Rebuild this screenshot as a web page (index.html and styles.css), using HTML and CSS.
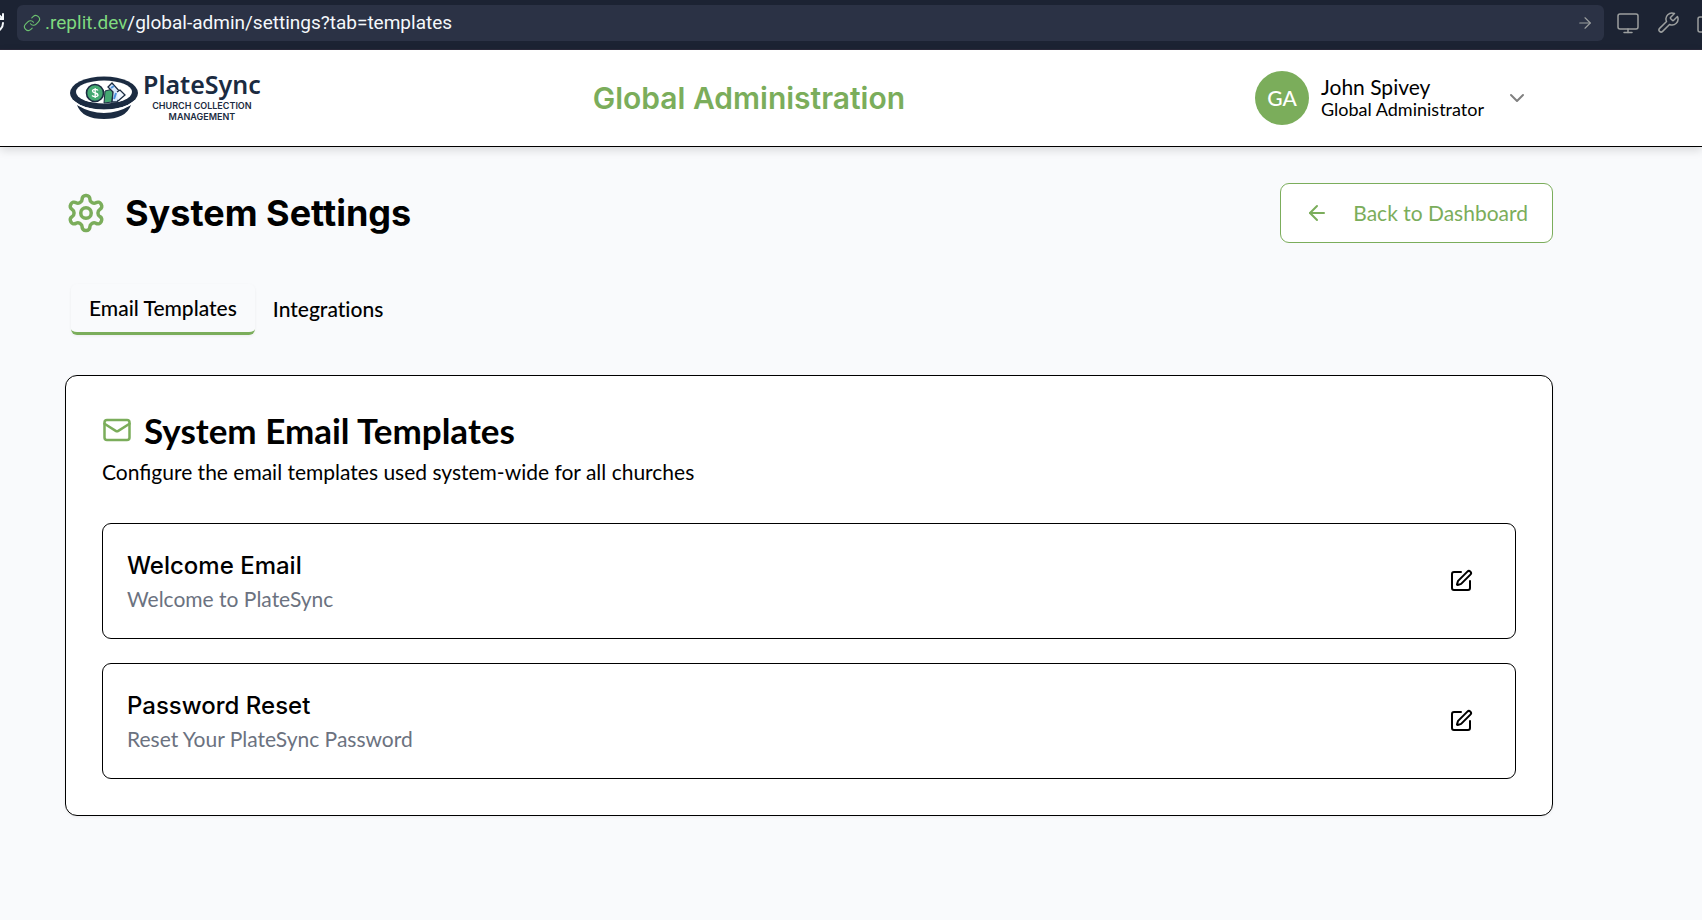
FILE: index.html
```html
<!DOCTYPE html>
<html lang="en">
<head>
<meta charset="utf-8">
<title>System Settings - PlateSync</title>
<link rel="stylesheet" href="styles.css">
</head>
<body>
<div class="browser-bar">
  <button class="bar-icon reload" aria-label="Reload">
    <svg viewBox="0 0 24 24" class="icon"><path d="M3 12a9 9 0 0 1 9-9 9.750 9.750 0 0 1 6.740 2.740L21 8"/><path d="M21 3v5h-5"/><path d="M21 12a9 9 0 0 1-9 9 9.750 9.750 0 0 1-6.740-2.740L3 16"/></svg>
  </button>
  <div class="address">
    <svg viewBox="0 0 24 24" class="icon link-icon"><path d="M10 13a5 5 0 0 0 7.540.540l3-3a5 5 0 0 0-7.070-7.070l-1.720 1.710"/><path d="M14 11a5 5 0 0 0-7.540-.540l-3 3a5 5 0 0 0 7.070 7.070l1.710-1.710"/></svg>
    <span class="url"><span class="host">.replit.dev</span>/global-admin/settings?tab=templates</span>
    <button class="bar-icon go" aria-label="Go"><svg viewBox="0 0 24 24" class="icon"><path d="M5 12h14"/><path d="m12 5 7 7-7 7"/></svg></button>
  </div>
  <div class="bar-tools">
    <button class="bar-icon" aria-label="Preview size"><svg viewBox="0 0 24 24" class="icon"><rect width="20" height="15" x="2" y="3" rx="2"/><path d="M8 21.500h8"/><path d="M12 18v3.500"/></svg></button>
    <button class="bar-icon" aria-label="Developer tools"><svg viewBox="0 0 24 24" class="icon"><path d="M14.700 6.300a1 1 0 0 0 0 1.400l1.600 1.600a1 1 0 0 0 1.400 0l3.770-3.770a6 6 0 0 1-7.940 7.940l-6.910 6.910a2.120 2.120 0 0 1-3-3l6.910-6.910a6 6 0 0 1 7.940-7.940l-3.760 3.760z"/></svg></button>
    <button class="bar-icon" aria-label="Open in new tab"><svg viewBox="0 0 24 24" class="icon"><path d="M15 3h6v6"/><path d="M10 14 21 3"/><path d="M18 13v6a2 2 0 0 1-2 2H4a2 2 0 0 1-2-2V8a2 2 0 0 1 2-2h6"/></svg></button>
  </div>
</div>

<header class="site-header">
  <a href="#" class="logo" aria-label="PlateSync home">
    <svg class="logo-mark" viewBox="0 0 68 42">
      <path d="M7 28Q20 36 34 36T61 28Q56 42 34 42 12 42 7 28Z" fill="#1b2b41"/>
      <ellipse cx="34" cy="16" rx="34" ry="16.500" fill="#1b2b41"/>
      <path d="M3 24Q14 33.500 34 33.500T65 24" fill="none" stroke="#fff" stroke-width="1.500"/>
      <ellipse cx="34" cy="15" rx="28" ry="11.500" fill="#fff"/>
      <path d="M35 14 43 12 42 25 34 26Z" fill="#45a972" stroke="#1b2b41"/>
      <path d="M38 10 42 6 52 17 47 25 42 25 43 15Z" fill="#d7e8fb" stroke="#1b2b41" stroke-width="1.300"/>
      <path d="M47 15 50 13 55 18 48 24" fill="#eef5fd" stroke="#1b2b41" stroke-width="1.300"/>
      <path d="M41 11 44 9M46 16 44 22" stroke="#4a90dd" stroke-width="2" fill="none"/>
      <circle cx="25" cy="16" r="8.500" fill="#45a972" stroke="#1b2b41" stroke-width="1.600"/>
      <path d="M28 13.500c-1-1.500-5.500-1.500-5.500.5 0 2.500 5.500 1.500 5.500 4 0 2-4.500 2-6 .5M25.200 11v10" fill="none" stroke="#fff" stroke-width="1.300"/>
    </svg>
    <span class="logo-text">
      <span class="logo-name">PlateSync</span>
      <span class="logo-tag">CHURCH COLLECTION<br>MANAGEMENT</span>
    </span>
  </a>
  <div class="header-title">Global Administration</div>
  <button class="user-menu">
    <span class="avatar">GA</span>
    <span class="user-text">
      <span class="user-name">John Spivey</span>
      <span class="user-role">Global Administrator</span>
    </span>
    <svg viewBox="0 0 24 24" class="icon chevron"><path d="m6 9 6 6 6-6"/></svg>
  </button>
</header>

<main class="page">
  <div class="page-head">
    <h1 class="page-title">
      <svg viewBox="0 0 24 24" class="icon gear"><path d="M12.220 2h-.440a2 2 0 0 0-2 2v.180a2 2 0 0 1-1 1.730l-.430.250a2 2 0 0 1-2 0l-.150-.080a2 2 0 0 0-2.730.730l-.220.380a2 2 0 0 0 .730 2.730l.150.100a2 2 0 0 1 1 1.720v.510a2 2 0 0 1-1 1.740l-.150.090a2 2 0 0 0-.730 2.730l.220.380a2 2 0 0 0 2.730.730l.150-.080a2 2 0 0 1 2 0l.430.250a2 2 0 0 1 1 1.730V20a2 2 0 0 0 2 2h.440a2 2 0 0 0 2-2v-.180a2 2 0 0 1 1-1.730l.430-.250a2 2 0 0 1 2 0l.150.080a2 2 0 0 0 2.730-.730l.220-.390a2 2 0 0 0-.730-2.730l-.150-.080a2 2 0 0 1-1-1.740v-.500a2 2 0 0 1 1-1.740l.150-.090a2 2 0 0 0 .730-2.730l-.220-.380a2 2 0 0 0-2.730-.730l-.150.080a2 2 0 0 1-2 0l-.430-.250a2 2 0 0 1-1-1.730V4a2 2 0 0 0-2-2z"/><circle cx="12" cy="12" r="3"/></svg>
      System Settings
    </h1>
    <a href="#" class="back-button">
      <svg viewBox="0 0 24 24" class="icon"><path d="m12 19-7-7 7-7"/><path d="M19 12H5"/></svg>
      Back to Dashboard
    </a>
  </div>

  <div class="tabs" role="tablist">
    <button class="tab tab-active" role="tab" aria-selected="true">Email Templates</button>
    <button class="tab" role="tab" aria-selected="false">Integrations</button>
  </div>

  <section class="card">
    <h2 class="card-title">
      <svg viewBox="0 0 24 24" class="icon mail"><rect width="20" height="16" x="2" y="4" rx="2"/><path d="m22 7-8.970 5.700a1.940 1.940 0 0 1-2.060 0L2 7"/></svg>
      System Email Templates
    </h2>
    <p class="card-desc">Configure the email templates used system-wide for all churches</p>
    <div class="template-list">
      <article class="template">
        <div>
          <h3 class="template-name">Welcome Email</h3>
          <p class="template-subject">Welcome to PlateSync</p>
        </div>
        <button class="edit-button" aria-label="Edit Welcome Email"><svg viewBox="0 0 24 24" class="icon"><path d="M12 3H5a2 2 0 0 0-2 2v14a2 2 0 0 0 2 2h14a2 2 0 0 0 2-2v-7"/><path d="M18.375 2.625a1 1 0 0 1 3 3l-9.013 9.014a2 2 0 0 1-.853.505l-2.873.840a.5.5 0 0 1-.620-.620l.840-2.873a2 2 0 0 1 .506-.852z"/></svg></button>
      </article>
      <article class="template">
        <div>
          <h3 class="template-name">Password Reset</h3>
          <p class="template-subject">Reset Your PlateSync Password</p>
        </div>
        <button class="edit-button" aria-label="Edit Password Reset"><svg viewBox="0 0 24 24" class="icon"><path d="M12 3H5a2 2 0 0 0-2 2v14a2 2 0 0 0 2 2h14a2 2 0 0 0 2-2v-7"/><path d="M18.375 2.625a1 1 0 0 1 3 3l-9.013 9.014a2 2 0 0 1-.853.505l-2.873.840a.5.5 0 0 1-.620-.620l.840-2.873a2 2 0 0 1 .506-.852z"/></svg></button>
      </article>
    </div>
  </section>
</main>
</body>
</html>
```

FILE: styles.css
```css
* { box-sizing: border-box; }

body {
  margin: 0;
  min-height: 100vh;
  overflow-x: hidden;
  background: #f9fafc;
  color: #000;
  font-family: Lato, sans-serif;
  font-size: 21px;
  line-height: 30px;
}

h1, h2, h3, p { margin: 0; }
a { color: inherit; text-decoration: none; }
button { padding: 0; border: 0; background: none; color: inherit; font: inherit; text-align: left; cursor: pointer; }

.icon {
  display: block;
  flex: none;
  width: 24px;
  height: 24px;
  fill: none;
  stroke: currentColor;
  stroke-width: 2;
  stroke-linecap: round;
  stroke-linejoin: round;
}

/* Browser bar */
.browser-bar {
  display: flex;
  align-items: center;
  height: 50px;
  padding-bottom: 4px;
  overflow: hidden;
  background: #1c2333;
  border-bottom: 1px solid #2b2a3b;
  color: #9c9f9f;
}
.bar-icon .icon { stroke-width: 1.5; }
.reload { margin-left: -18px; color: #f5f9fc; }
.reload .icon { stroke-width: 2; }
.address {
  display: flex;
  flex: 1;
  align-items: center;
  gap: 4px;
  height: 36px;
  margin-left: 11px;
  padding: 0 10px 0 6px;
  background: #2b3245;
  border-radius: 6px;
}
.link-icon { width: 18px; height: 18px; color: #6cc070; stroke-width: 1.5; }
.url { flex: 1; color: #f5f9fc; font-family: Roboto, sans-serif; font-size: 19px; }
.host { color: #7fd97f; }
.go .icon { width: 18px; height: 18px; }
.bar-tools { display: flex; gap: 16px; margin: 0 -18px 0 12px; }

/* Site header */
.site-header {
  display: flex;
  align-items: center;
  justify-content: space-between;
  min-height: 97px;
  padding: 0 173px 0 65px;
  background: #fff;
  border-bottom: 1px solid #000;
  box-shadow: 0 3px 9px rgba(0, 0, 0, 0.14);
}
.logo { display: flex; align-items: center; gap: 5px; padding-left: 5px; }
.logo-mark { width: 68px; height: 44px; }
.logo-text { margin-bottom: 6px; color: #1b2b41; }
.logo-name { display: block; font-family: "Noto Sans", sans-serif; font-size: 25px; font-weight: 600; line-height: 32px; }
.logo-tag { display: block; font-family: Inter, sans-serif; font-size: 9px; font-weight: 600; line-height: 11px; text-align: center; }
.header-title { margin-right: 18px; color: #7bad5b; font-family: Inter, sans-serif; font-size: 30px; font-weight: 600; line-height: 36px; }
.user-menu { display: flex; align-items: center; gap: 12px; }
.avatar {
  display: grid;
  place-items: center;
  width: 54px;
  height: 54px;
  border-radius: 50%;
  background: #7bad5b;
  color: #fff;
  font-weight: 500;
}
.user-text { min-width: 166px; }
.user-name, .user-role { display: block; }
.user-name { font-size: 21px; line-height: 22px; }
.user-role { font-size: 18px; line-height: 22px; }
.chevron { margin-left: 6px; color: #808080; }

/* Page */
.page { padding: 36px 149px 36px 65px; }
.page-head { display: flex; align-items: center; justify-content: space-between; }
.page-title { display: flex; align-items: center; gap: 18px; font-family: Inter, sans-serif; font-size: 36px; font-weight: 700; line-height: 45px; }
.gear { width: 42px; height: 42px; color: #7bad5b; }
.back-button {
  display: flex;
  align-items: center;
  gap: 24px;
  height: 60px;
  padding: 0 24px;
  border: 1px solid #7bad5b;
  border-radius: 9px;
  background: #fff;
  color: #7bad5b;
}
.tabs { display: flex; align-items: center; margin-top: 41px; padding: 0 6px; }
.tab { height: 51px; padding: 0 18px; border-bottom: 1px solid transparent; border-radius: 6px; font-weight: 500; font-variant-ligatures: none; }
.tab-active { border-bottom: 3px solid #7bad5b; box-shadow: 0 1px 3px rgba(0, 0, 0, 0.06); }

.card {
  margin-top: 40px;
  padding: 36px;
  border: 1px solid #000;
  border-radius: 12px;
  background: #fff;
  box-shadow: 0 1px 3px rgba(0, 0, 0, 0.06);
}
.card-title { display: flex; align-items: center; gap: 12px; font-size: 35px; font-weight: 700; line-height: 36px; }
.mail { width: 30px; height: 30px; color: #7bad5b; }
.card-desc { margin-top: 9px; }
.template-list { display: grid; gap: 24px; margin-top: 36px; }
.template {
  display: flex;
  align-items: center;
  justify-content: space-between;
  padding: 24px;
  border: 1px solid #000;
  border-radius: 9px;
}
.template-name { font-family: Inter, sans-serif; font-size: 24px; font-weight: 500; line-height: 36px; }
.template-subject { color: #6b7280; }
.edit-button { display: grid; place-items: center; width: 60px; height: 54px; }
```
